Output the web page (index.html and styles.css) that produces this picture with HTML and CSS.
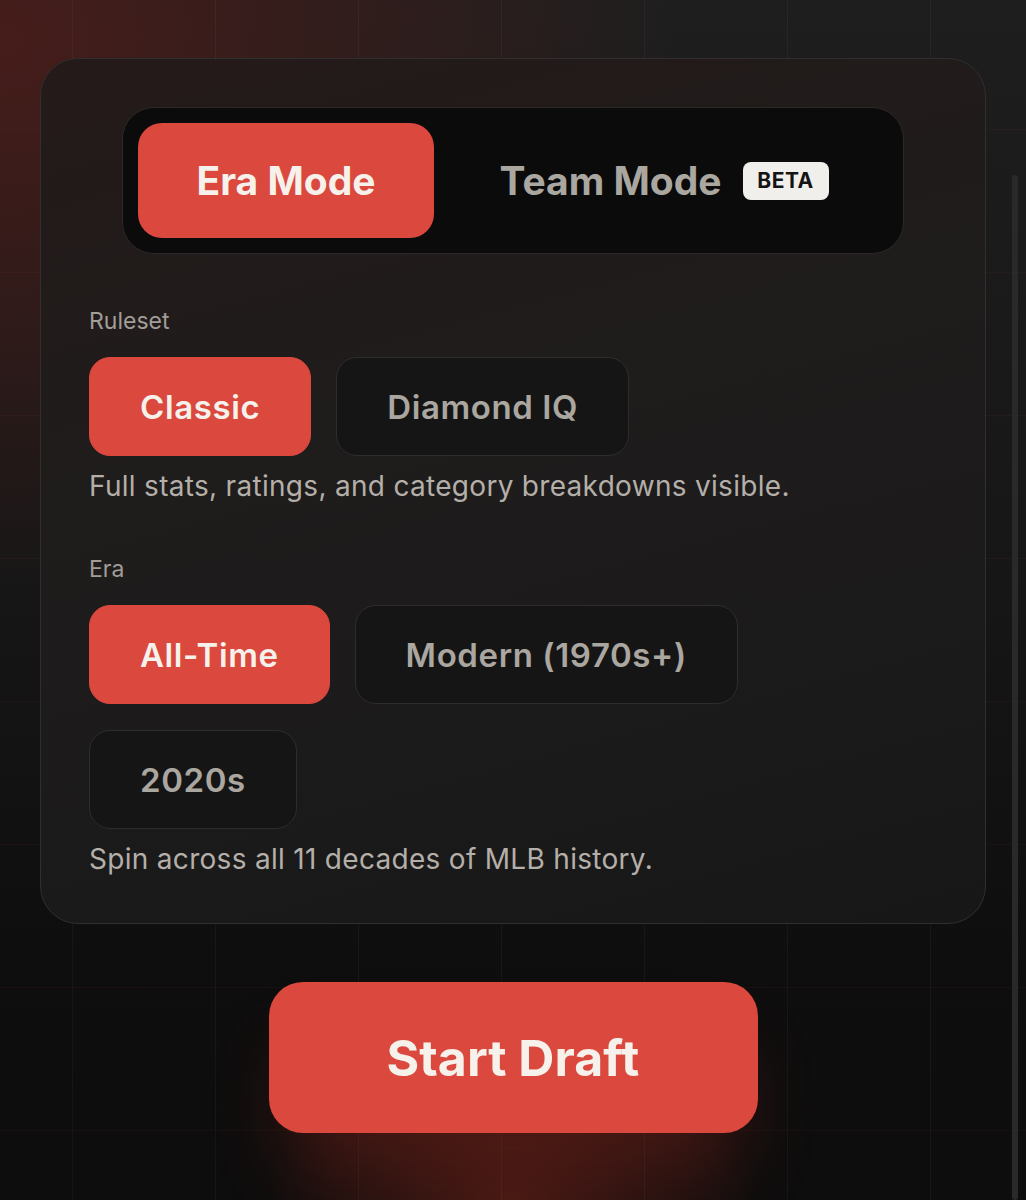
FILE: index.html
```html
<!DOCTYPE html>
<html lang="en">
<head>
  <meta charset="UTF-8">
  <meta name="viewport" content="width=device-width,initial-scale=1">
  <title>Draft Setup</title>
  <link rel="stylesheet" href="styles.css">
</head>
<body>
  <div class="page">
    <section class="setup-card">
      <div class="mode-toggle">
        <button class="mode-btn active">Era Mode</button>
        <button class="mode-btn">Team Mode <span class="badge">BETA</span></button>
      </div>

      <div class="field">
        <span class="field-label">Ruleset</span>
        <div class="chips">
          <button class="chip active">Classic</button>
          <button class="chip">Diamond IQ</button>
        </div>
        <p class="hint">Full stats, ratings, and category breakdowns visible.</p>
      </div>

      <div class="field">
        <span class="field-label">Era</span>
        <div class="chips">
          <button class="chip active">All-Time</button>
          <button class="chip">Modern (1970s+)</button>
          <button class="chip">2020s</button>
        </div>
        <p class="hint">Spin across all 11 decades of MLB history.</p>
      </div>
    </section>

    <div class="actions">
      <button class="start-btn">Start Draft</button>
    </div>
  </div>
  <div class="scroll-track" aria-hidden="true"></div>
</body>
</html>
```

FILE: styles.css
```css
:root { --red: #da483e; --text: #f6f1eb; --muted: #aaa6a0; --hint: #b4afa9; --chip-bg: #161515; --chip-border: #2e2c2c; }
html, body { height: 100%; }
body {
  margin: 0;
  font-family: Inter, "Noto Sans", sans-serif;
  color: var(--text);
  background-color: #121111;
  background-image:
    linear-gradient(to right, rgba(255,255,255,0.04) 1px, transparent 1px),
    linear-gradient(to bottom, rgba(200,70,60,0.06) 1px, transparent 1px),
    radial-gradient(ellipse 330px 200px at 512px 1200px, rgba(140,40,30,0.45), transparent 75%),
    radial-gradient(ellipse 860px 700px at 0 40px, rgba(90,28,24,0.65), transparent 78%),
    linear-gradient(to bottom, #1f1e1e 0%, #171616 50%, #0f0e0e 80%, #0e0d0d 100%);
  background-size: 143px 143px, 143px 143px, auto, auto, auto;
  background-position: 72px 0, 0 129px, 0 0, 0 0, 0 0;
  overflow: hidden;
}
.page { padding-top: 58px; }
.setup-card {
  margin: 0 40px;
  padding: 48px 48px 48px;
  border: 1.5px solid #302e2e;
  border-radius: 38px;
  background: linear-gradient(165deg, #241a19 0%, #1f1c1c 40%, #1b1a1a 75%, #181717 100%);
}
button { font-family: inherit; cursor: pointer; }

.mode-toggle {
  display: flex;
  margin: 0 33px;
  padding: 15px;
  background: #0b0b0b;
  border: 1px solid #2a2828;
  border-radius: 32px;
}
.mode-btn {
  height: 115px;
  border: none;
  border-radius: 24px;
  background: transparent;
  color: var(--muted);
  font-size: 39px;
  font-weight: 700;
  display: flex;
  align-items: center;
  justify-content: center;
  gap: 21px;
}
.mode-btn.active { width: 296px; background: var(--red); color: var(--text); }
.mode-btn:not(.active) { flex: 1; padding-left: 12px; }
.badge {
  display: inline-flex;
  align-items: center;
  justify-content: center;
  width: 86px;
  height: 38px;
  border-radius: 8px;
  background: #f1efeb;
  color: #141414;
  font-size: 21px;
  font-weight: 700;
  letter-spacing: 0.5px;
}

.field { margin-top: 55px; }
.field-label { display: block; font-size: 23px; color: #a19d98; line-height: 25px; }
.chips { display: flex; flex-wrap: wrap; gap: 26px 25px; margin-top: 23px; }
.chip {
  height: 99px;
  padding: 0 50px;
  border: 1.5px solid var(--chip-border);
  border-radius: 21px;
  background: var(--chip-bg);
  color: var(--muted);
  font-size: 33px;
  font-weight: 600;
  letter-spacing: 0.6px;
}
.chip.active { background: var(--red); border-color: var(--red); color: var(--text); }
.hint { margin: 14px 0 0; font-size: 28px; line-height: 32px; letter-spacing: 0.3px; color: var(--hint); }

.actions { display: flex; justify-content: center; margin-top: 58px; }
.start-btn {
  width: 489px;
  height: 151px;
  border: none;
  border-radius: 34px;
  background: var(--red);
  color: var(--text);
  font-size: 50px;
  font-weight: 700;
  box-shadow: 0 50px 70px -20px rgba(150, 40, 30, 0.35);
}

.scroll-track {
  position: absolute;
  top: 175px;
  bottom: 0;
  left: 1012px;
  width: 6px;
  border-radius: 3px;
  background: #2a2929;
}
```
